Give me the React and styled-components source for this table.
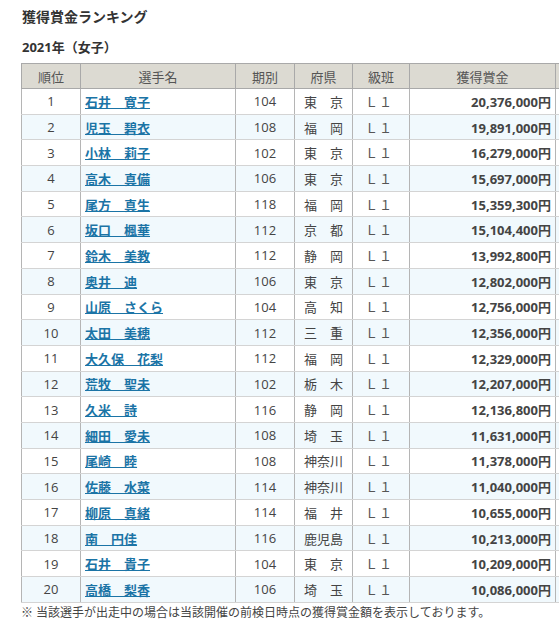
import React from 'react';
import styled, { createGlobalStyle } from 'styled-components';

const GlobalStyle = createGlobalStyle`
  html, body {
    margin: 0;
    padding: 0;
    background: #fff;
    overflow: hidden;
  }
  body {
    font-family: "Open Sans", "Noto Sans CJK JP", sans-serif;
    color: #333;
  }
`;

const Page = styled.div`
  width: 600px;
  padding: 6px 0 0 21px;
`;

const Title = styled.h2`
  margin: 0;
  font-size: 14px;
  font-weight: bold;
  line-height: 22px;
  color: #333;
  padding-left: 1px;
`;

const SubTitle = styled.h3`
  margin: 10px 0 0;
  font-size: 13px;
  font-weight: bold;
  line-height: 18px;
  color: #333;
  padding-left: 1px;
`;

const Table = styled.table`
  margin-top: 7px;
  border-collapse: collapse;
  table-layout: fixed;
  width: 594px;
  font-size: 13px;
`;

const Th = styled.th`
  height: 24px;
  padding: 0;
  background: #dcdad2;
  border: 1px solid #a9a9a9;
  font-weight: normal;
  color: #555;
  text-align: center;
`;

const Row = styled.tr`
  background: ${p => (p.$even ? '#f1f9fd' : '#fff')};
`;

const Td = styled.td`
  height: 24.7px;
  padding: 0 4px;
  border: 1px solid #b5b5b5;
  border-top-color: #d4d4d4;
  border-bottom-color: #d4d4d4;
  color: #444;
  text-align: ${p => p.$align || 'center'};
  font-weight: ${p => (p.$bold ? 'bold' : 'normal')};
  white-space: nowrap;
  overflow: hidden;
`;

const ClassText = styled.span`
  color: #555;
  letter-spacing: 1px;
  margin-right: 4px;
`;

const NameLink = styled.a`
  color: #1b74a6;
  font-weight: bold;
  text-decoration: underline;
`;

const Note = styled.p`
  margin: 1px 0 0;
  font-size: 12px;
  line-height: 18px;
  color: #444;
`;

const riders = [
  ['石井　寛子', 104, '東　京', '20,376,000'],
  ['児玉　碧衣', 108, '福　岡', '19,891,000'],
  ['小林　莉子', 102, '東　京', '16,279,000'],
  ['高木　真備', 106, '東　京', '15,697,000'],
  ['尾方　真生', 118, '福　岡', '15,359,300'],
  ['坂口　楓華', 112, '京　都', '15,104,400'],
  ['鈴木　美教', 112, '静　岡', '13,992,800'],
  ['奥井　迪', 106, '東　京', '12,802,000'],
  ['山原　さくら', 104, '高　知', '12,756,000'],
  ['太田　美穂', 112, '三　重', '12,356,000'],
  ['大久保　花梨', 112, '福　岡', '12,329,000'],
  ['荒牧　聖未', 102, '栃　木', '12,207,000'],
  ['久米　詩', 116, '静　岡', '12,136,800'],
  ['細田　愛未', 108, '埼　玉', '11,631,000'],
  ['尾崎　睦', 108, '神奈川', '11,378,000'],
  ['佐藤　水菜', 114, '神奈川', '11,040,000'],
  ['柳原　真緒', 114, '福　井', '10,655,000'],
  ['南　円佳', 116, '鹿児島', '10,213,000'],
  ['石井　貴子', 104, '東　京', '10,209,000'],
  ['高橋　梨香', 106, '埼　玉', '10,086,000'],
];

export default function App() {
  return (
    <>
      <GlobalStyle />
      <Page>
        <Title>獲得賞金ランキング</Title>
        <SubTitle>2021年（女子）</SubTitle>
        <Table>
          <colgroup>
            <col style={{ width: 59 }} />
            <col style={{ width: 155 }} />
            <col style={{ width: 59 }} />
            <col style={{ width: 58 }} />
            <col style={{ width: 57 }} />
            <col style={{ width: 146 }} />
            <col style={{ width: 60 }} />
          </colgroup>
          <thead>
            <tr>
              <Th>順位</Th>
              <Th>選手名</Th>
              <Th>期別</Th>
              <Th>府県</Th>
              <Th>級班</Th>
              <Th>獲得賞金</Th>
              <Th />
            </tr>
          </thead>
          <tbody>
            {riders.map(([name, term, pref, prize], i) => (
              <Row key={i} $even={i % 2 === 1}>
                <Td>{i + 1}</Td>
                <Td $align="left">
                  <NameLink href="#">{name}</NameLink>
                </Td>
                <Td>{term}</Td>
                <Td>{pref}</Td>
                <Td><ClassText>Ｌ１</ClassText></Td>
                <Td $align="right" $bold>{prize}円</Td>
                <Td />
              </Row>
            ))}
          </tbody>
        </Table>
        <Note>※ 当該選手が出走中の場合は当該開催の前検日時点の獲得賞金額を表示しております。</Note>
      </Page>
    </>
  );
}
